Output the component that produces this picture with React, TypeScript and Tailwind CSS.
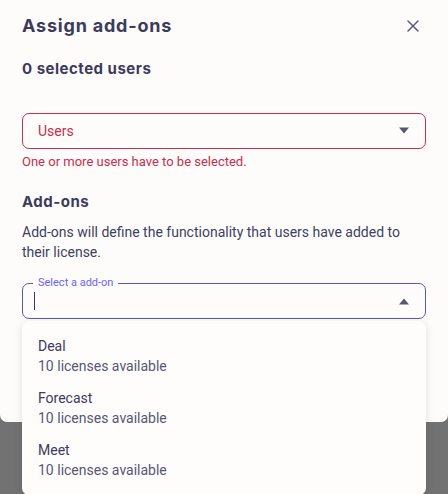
import React from 'react';

const addons = [
  { name: 'Deal', available: 10 },
  { name: 'Forecast', available: 10 },
  { name: 'Meet', available: 10 },
];

const Caret = ({ up }: { up?: boolean }) => (
  <svg width="12" height="8" viewBox="0 0 12 8" className="shrink-0">
    {up ? <path d="M1 7.5 L6 1.5 L11 7.5 Z" fill="#575772" /> : <path d="M1 0.5 L6 6.5 L11 0.5 Z" fill="#575772" />}
  </svg>
);

const App: React.FC = () => {
  return (
    <div className="relative h-[494px] w-full overflow-hidden bg-[#727272]">
      <div className="h-[422px] rounded-b-[7px] bg-[#fdfcfb] px-[22px] pt-[14px] text-[#3b3b5c] font-['Inter','Noto_Sans',sans-serif]">
        <div className="flex items-center justify-between">
          <h2 className="text-[18px] font-bold leading-6 tracking-[0.8px]">Assign add-ons</h2>
          <button className="mr-[7px] text-[#5b5b78]">
            <svg width="12" height="12" viewBox="0 0 12 12">
              <path d="M1 1 L11 11 M11 1 L1 11" stroke="currentColor" strokeWidth="1.5" strokeLinecap="round" />
            </svg>
          </button>
        </div>

        <p className="mt-[21px] text-[15px] font-bold leading-5 tracking-[0.5px]">0 selected users</p>

        {/* Users select */}
        <div className="mt-[34px] flex h-[36px] items-center justify-between rounded-[7px] border border-[#c2304f] pl-[15px] pr-[15px] font-['Roboto',sans-serif]">
          <span className="text-[14px] text-[#c2304f]">Users</span>
          <Caret />
        </div>
        <p className="mt-[5px] text-[13px] leading-4 text-[#c2304f] font-['Roboto',sans-serif]">
          One or more users have to be selected.
        </p>

        <h3 className="mt-[22px] text-[15px] font-bold leading-5 tracking-[0.5px]">Add-ons</h3>
        <p className="mt-[10px] text-[14px] leading-5 text-[#3e3f5e] font-['Roboto',sans-serif]">
          Add-ons will define the functionality that users have added to their license.
        </p>

        {/* Add-on select, open */}
        <div className="relative mt-[21px]">
          <div className="relative flex h-[36px] items-center justify-between rounded-[7px] border border-[#5c58a8] pl-[11px] pr-[15px] font-['Roboto',sans-serif]">
            <span className="absolute -top-[8px] left-[10px] bg-[#fdfcfb] px-[5px] text-[11px] leading-[14px] text-[#6c63f5]">
              Select a add-on
            </span>
            <span className="h-[18px] w-px bg-[#3b3b5c]" />
            <Caret up />
          </div>

          <div className="absolute left-0 right-0 top-[38px] h-[174px] rounded-[7px] bg-[#fefdfc] pt-[9px] pb-[8px] shadow-[0_2px_8px_rgba(0,0,0,0.12)] font-['Roboto',sans-serif]">
            {addons.map(a => (
              <div key={a.name} className="px-[16px] py-[6px]">
                <p className="text-[14px] leading-5 text-[#3b3b5c]">{a.name}</p>
                <p className="text-[14px] leading-5 text-[#575772]">{a.available} licenses available</p>
              </div>
            ))}
          </div>
        </div>
      </div>
    </div>
  );
};

export default App;
